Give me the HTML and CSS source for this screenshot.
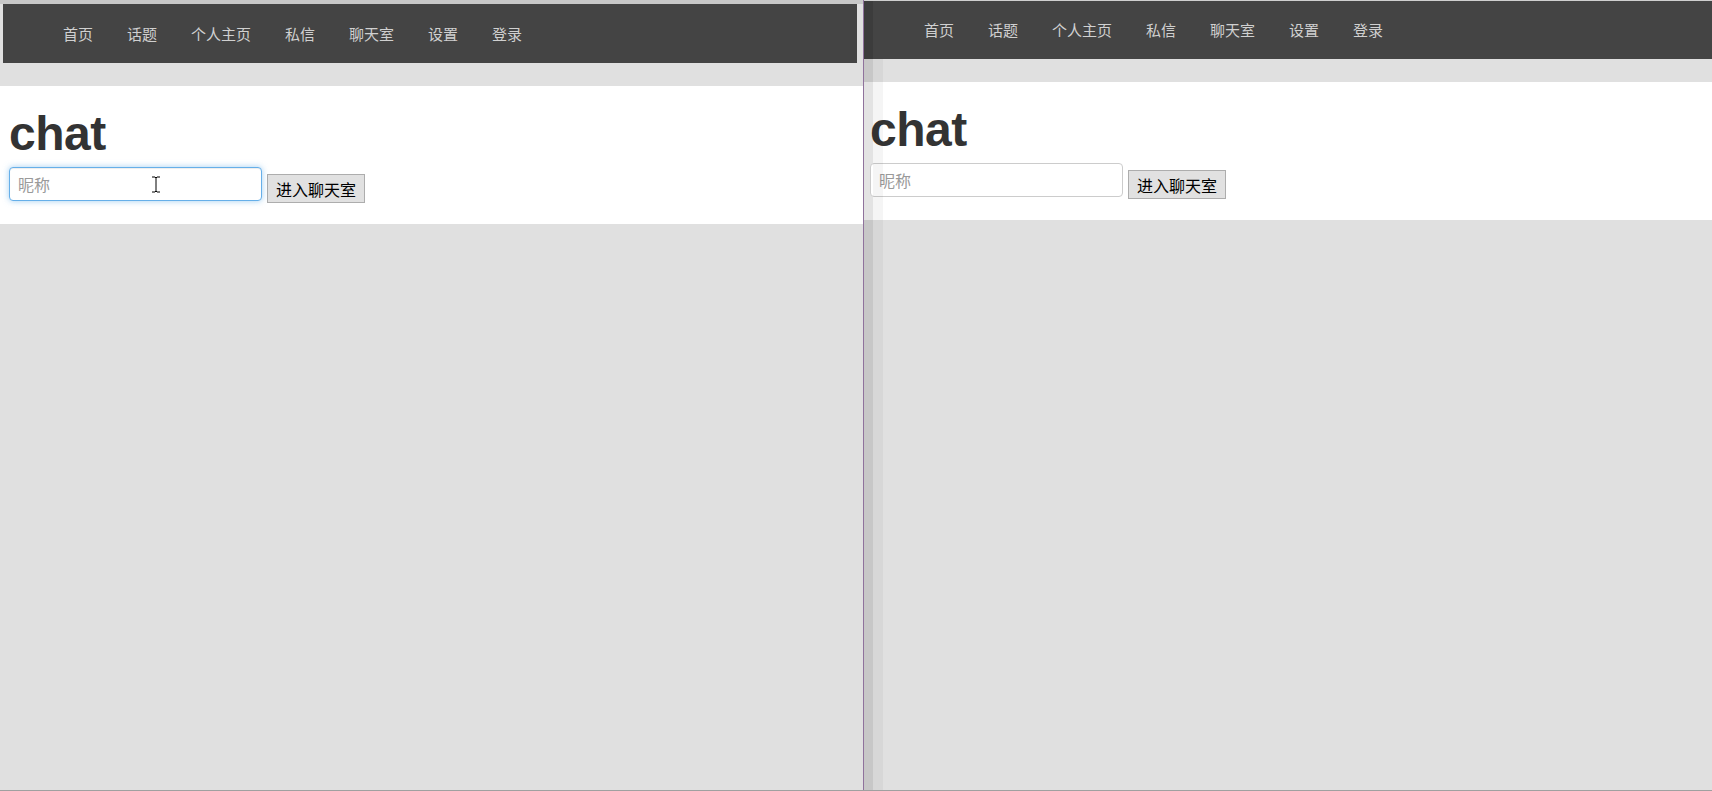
FILE: index.html
```html
<!DOCTYPE html>
<html lang="zh">
<head>
<meta charset="utf-8">
<title>chat</title>
<link rel="stylesheet" href="styles.css">
</head>
<body>
<div class="screen">
  <section class="win win-left">
    <div class="win-top"></div>
    <nav class="nav">
      <ul class="nav-list">
        <li>首页</li><li>话题</li><li>个人主页</li><li>私信</li><li>聊天室</li><li>设置</li><li>登录</li>
      </ul>
    </nav>
    <div class="band"></div>
    <main class="main">
      <h1 class="title">chat</h1>
      <form class="form">
        <div class="field">
          <input class="input input-focus" type="text" placeholder="昵称">
          <svg class="cursor" width="12" height="17" viewBox="0 0 12 17"><path d="M2 1h3l1 1 1-1h3M6 2v13M2 16h3l1-1 1 1h3" fill="none" stroke="#000" stroke-width="1"/></svg>
        </div>
        <button class="btn" type="button">进入聊天室</button>
      </form>
    </main>
    <div class="rest"></div>
  </section>
  <div class="divider"></div>
  <section class="win win-right">
    <div class="win-top thin"></div>
    <nav class="nav nav-right">
      <ul class="nav-list">
        <li>首页</li><li>话题</li><li>个人主页</li><li>私信</li><li>聊天室</li><li>设置</li><li>登录</li>
      </ul>
    </nav>
    <div class="band"></div>
    <main class="main main-right">
      <h1 class="title">chat</h1>
      <form class="form">
        <div class="field">
          <input class="input" type="text" placeholder="昵称">
        </div>
        <button class="btn" type="button">进入聊天室</button>
      </form>
    </main>
    <div class="rest"></div>
  </section>
</div>
</body>
</html>
```

FILE: styles.css
```css
* { box-sizing: border-box; }
html, body { margin: 0; padding: 0; }
body {
  background: #e0e0e0;
  font-family: "Noto Sans CJK SC", "Liberation Sans", sans-serif;
  overflow: hidden;
}
.screen {
  display: flex;
  height: 791px;
  border-bottom: 1px solid #a0a0a0;
}
.win {
  display: flex;
  flex-direction: column;
  background: #e0e0e0;
  position: relative;
}
.win-left { width: 863px; flex: none; }
.win-right { flex: 1; }
.win-right::before {
  content: "";
  position: absolute;
  left: 0; top: 1px; bottom: 0;
  width: 9px;
  background: rgba(0,0,0,0.11);
  pointer-events: none;
}
.win-right::after {
  content: "";
  position: absolute;
  left: 9px; top: 59px; bottom: 0;
  width: 10px;
  background: rgba(0,0,0,0.04);
  pointer-events: none;
}
.divider { width: 1px; flex: none; background: #8f729c; }
.win-top { height: 4px; background: #c8c8c8; }
.win-top.thin { height: 1px; background: #cfcfcf; }
.nav {
  height: 59px;
  margin: 0 6px 0 3px;
  background: #444;
  display: flex;
  align-items: center;
  padding-left: 43px;
}
.nav-right {
  height: 58px;
  margin: 0;
}
.nav-list {
  list-style: none;
  margin: 0;
  padding: 0;
  display: flex;
}
.nav-list li {
  font-size: 15px;
  color: #d0d0d0;
  padding: 0 17px;
  line-height: 22px;
}
.band { height: 23px; }
.main {
  background: #fff;
  height: 138px;
  padding: 22px 0 0 9px;
}
.main-right { padding-left: 6px; }
.title {
  margin: 0;
  font-family: "Liberation Sans", Arial, sans-serif;
  font-weight: bold;
  font-size: 48px;
  line-height: 52px;
  color: #333;
  letter-spacing: -0.5px;
}
.form {
  display: flex;
  align-items: flex-start;
  gap: 5px;
  margin-top: 7px;
}
.field { position: relative; }
.input {
  width: 253px;
  height: 34px;
  border: 1px solid #ccc;
  border-radius: 4px;
  padding: 0 8px;
  font-family: "Noto Sans CJK SC", sans-serif;
  font-size: 16px;
  color: #555;
  background: #fff;
  outline: none;
  display: block;
}
.input::placeholder { color: #9a9a9a; }
.input-focus {
  border-color: #66afe9;
  box-shadow: inset 0 1px 1px rgba(0,0,0,.075), 0 0 6px rgba(102,175,233,.6);
}
.cursor {
  position: absolute;
  left: 141px;
  top: 9px;
}
.btn {
  margin-top: 7px;
  height: 29px;
  padding: 0 8px;
  background: #e1e1e1;
  border: 1px solid #adadad;
  border-radius: 0;
  font-family: "Noto Sans CJK SC", sans-serif;
  font-size: 16px;
  line-height: 26px;
  color: #000;
}
.rest { flex: 1; }
```
